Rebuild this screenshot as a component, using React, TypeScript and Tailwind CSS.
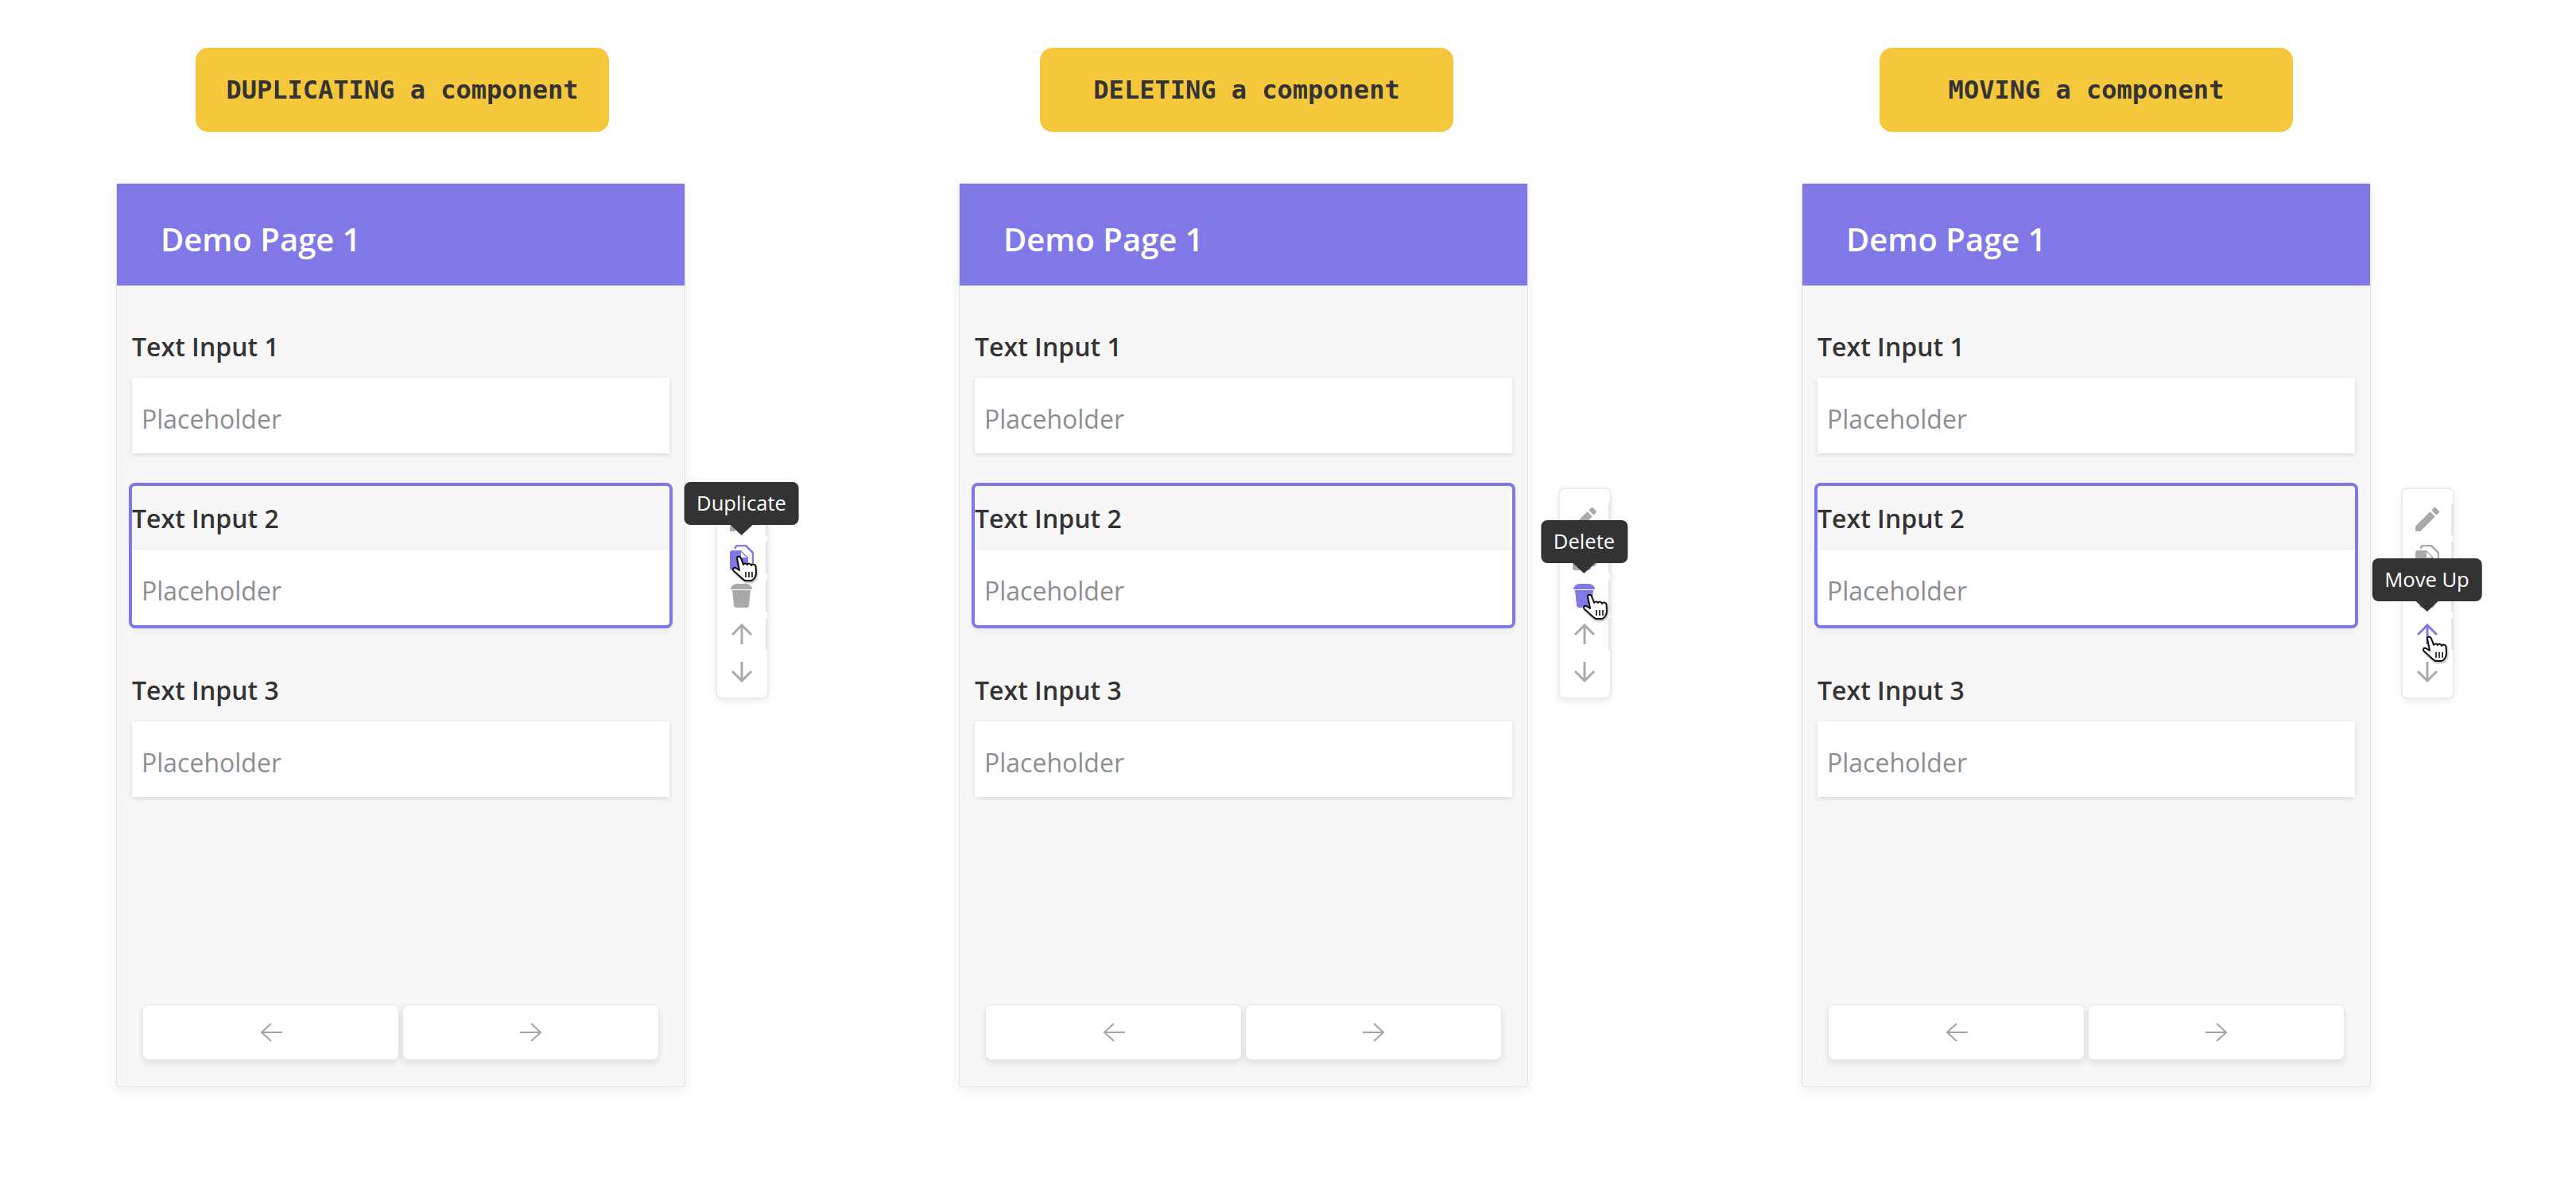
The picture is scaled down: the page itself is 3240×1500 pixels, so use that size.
import React from 'react';

type IconName = 'edit' | 'copy' | 'trash' | 'up' | 'down';

interface Demo {
  title: string;
  badgeOffset: string;
  active: IconName;
  tip: string;
  tipTop: string;
  cursorPos: string;
}

const ACTIVE = '#7f78e6';
const GRAY = '#a9a9a9';

const demos: Demo[] = [
  { title: 'DUPLICATING a component', badgeOffset: 'ml-[100px]', active: 'copy', tip: 'Duplicate', tipTop: 'top-[-9px]', cursorPos: 'left-[19px] top-[83px]' },
  { title: 'DELETING a component', badgeOffset: 'ml-[102px]', active: 'trash', tip: 'Delete', tipTop: 'top-[39px]', cursorPos: 'left-[29px] top-[131px]' },
  { title: 'MOVING a component', badgeOffset: 'ml-[98px]', active: 'up', tip: 'Move Up', tipTop: 'top-[87px]', cursorPos: 'left-[25px] top-[184px]' },
];

const ToolIcon = ({ name, color }: { name: IconName; color: string }) => {
  if (name === 'edit') {
    return (
      <svg width="40" height="40" viewBox="0 0 24 24" fill={color}>
        <path d="M3 17.25V21h3.75L17.81 9.94l-3.75-3.75L3 17.25zM20.71 7.04c.39-.39.39-1.02 0-1.41l-2.34-2.34c-.39-.39-1.02-.39-1.41 0l-1.83 1.83 3.75 3.75 1.83-1.83z" />
      </svg>
    );
  }
  if (name === 'copy') {
    return (
      <svg width="30" height="32" viewBox="0 0 30 32">
        <path d="M7 5V4a3 3 0 0 1 3-3h10l9 9v13a3 3 0 0 1-3 3h-2" fill="none" stroke={color} strokeWidth="2.5" />
        <path d="M3 7h11l9 9v13a3 3 0 0 1-3 3H3a3 3 0 0 1-3-3V10a3 3 0 0 1 3-3z" fill={color} />
        <path d="M14 9l7 7h-7z" fill="#fff" />
      </svg>
    );
  }
  if (name === 'trash') {
    return (
      <svg width="27" height="30" viewBox="0 0 27 30" fill={color}>
        <path d="M0 7C0 3 4 0 8 0h11c4 0 8 3 8 7z" />
        <path d="M2 8h23l-2 19a3 3 0 0 1-3 3H7a3 3 0 0 1-3-3z" />
      </svg>
    );
  }
  const d = name === 'up' ? 'M13 26V2M1 14L13 2l12 12' : 'M13 0v24M1 12l12 12 12-12';
  return (
    <svg width="26" height="26" viewBox="0 0 26 26" fill="none" stroke={color} strokeWidth="3">
      <path d={d} />
    </svg>
  );
};

const HandCursor = ({ className }: { className: string }) => (
  <svg className={`absolute z-20 drop-shadow-[1px_2px_1px_rgba(0,0,0,0.3)] ${className}`} width="32" height="34" viewBox="0 0 32 34" fill="#fff" stroke="#111" strokeWidth="2" strokeLinejoin="round">
    <path d="M6 4C6 1 10 1 11 4l3 8c1-2 4-2 5 0 1-2 4-2 5 1 1-2 5-2 5.500 1l.5 8c0 5-3 9-6 10h-8c-4-2-9-8-14-12-2-2-1-5 2-4l5 3z" />
    <path d="M17 21v7M21 21v7M25 21v7" fill="none" strokeWidth="1.6" />
  </svg>
);

const Tooltip = ({ text, top }: { text: string; top: string }) => (
  <div className={`absolute left-1/2 -ml-px -translate-x-1/2 z-10 ${top}`}>
    <div className="h-[54px] rounded-lg bg-[#333333] px-4 flex items-center text-[25.6px] text-white whitespace-nowrap">{text}</div>
    <div className="mx-auto h-0 w-0 border-x-[14px] border-t-[13px] border-x-transparent border-t-[#333333]" />
  </div>
);

const Toolbar = ({ demo }: { demo: Demo }) => {
  const names: IconName[] = ['edit', 'copy', 'trash', 'up', 'down'];
  return (
    <div className="relative ml-[38px] mt-[383px] w-[67px] h-[266px] rounded-lg bg-white border-2 border-[#ececec] shadow-[0_3px_8px_rgba(0,0,0,0.08)] pt-[14px]">
      {names.map((name) => (
        <div key={name} className="h-12 py-1">
          <div className={`h-10 flex items-center justify-center ${name === 'down' ? 'pr-0.5' : 'border-r-2 border-[#e6e6e6]'}`}>
            <ToolIcon name={name} color={name === demo.active ? ACTIVE : GRAY} />
          </div>
        </div>
      ))}
      <Tooltip text={demo.tip} top={demo.tipTop} />
      <HandCursor className={demo.cursorPos} />
    </div>
  );
};

const Field = ({ label, selected }: { label: string; selected?: boolean }) => (
  <div className={selected ? 'rounded outline-4 outline-[#7f78e6] shadow-[0_6px_12px_rgba(0,0,0,0.08)]' : ''}>
    <div className="h-20 flex items-center text-[32px] font-semibold text-[#333333] pt-0.5">{label}</div>
    <div className="h-[95px] bg-white flex items-center px-3 pt-2 text-[32px] text-[#8b8e92] shadow-[0_2px_6px_rgba(0,0,0,0.12)]">Placeholder</div>
  </div>
);

const NavButton = ({ dir }: { dir: 'left' | 'right' }) => (
  <div className="w-[323px] h-[70px] rounded-lg bg-white border border-[#e6e6e6] shadow-[0_4px_8px_rgba(0,0,0,0.1)] flex items-center justify-center">
    <svg width="28" height="24" viewBox="0 0 28 24" fill="none" stroke="#a3a3a3" strokeWidth="2">
      <path d={dir === 'left' ? 'M28 12H2M14 1L2 12l12 11' : 'M0 12h26M14 1l12 11-12 11'} />
    </svg>
  </div>
);

const Panel = () => (
  <div className="w-[716px] h-[1137px] flex flex-col rounded-sm bg-[#f7f7f7] border border-[#e4e4e4] shadow-[0_4px_16px_rgba(0,0,0,0.07)]">
    <div className="h-[128px] bg-[#7f78e6] flex items-center pl-[55px] pt-3 text-[40px] font-semibold text-white">Demo Page 1</div>
    <div className="flex-1 flex flex-col gap-[41px] pt-9 pl-[19px] pr-[19px]">
      <Field label="Text Input 1" />
      <Field label="Text Input 2" selected />
      <Field label="Text Input 3" />
    </div>
    <div className="flex justify-center gap-1 pb-[33px]">
      <NavButton dir="left" />
      <NavButton dir="right" />
    </div>
  </div>
);

export default function App() {
  return (
    <div className="w-[3240px] h-[1500px] bg-white flex pl-[146px] pt-[60px] overflow-hidden font-['Open_Sans',sans-serif]">
      {demos.map((demo) => (
        <div key={demo.title} className="w-[1060px] shrink-0 flex flex-col">
          <div className={`w-[520px] h-[106px] rounded-2xl bg-[#f5c73d] flex items-center justify-center font-['DejaVu_Sans_Mono',monospace] font-bold text-[32px] text-[#333333] ${demo.badgeOffset}`}>
            {demo.title}
          </div>
          <div className="flex items-start mt-[64px]">
            <Panel />
            <Toolbar demo={demo} />
          </div>
        </div>
      ))}
    </div>
  );
}
